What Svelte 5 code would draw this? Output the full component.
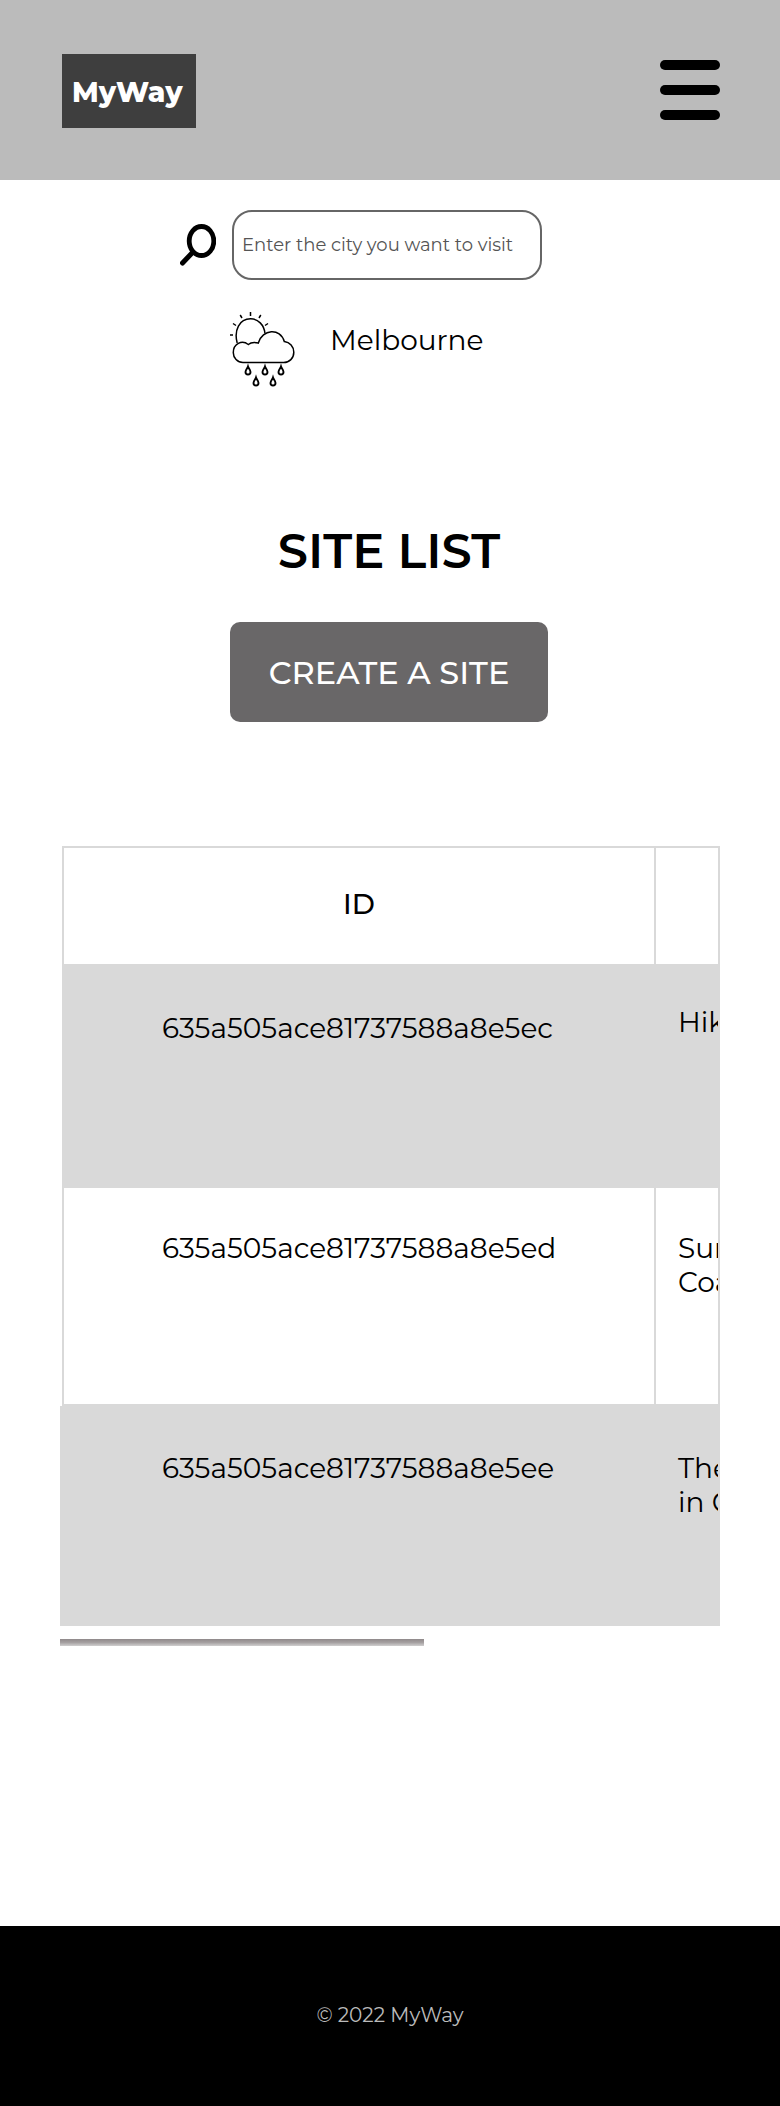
<script>
  let city = $state('');
  const sites = [
    { id: '635a505ace81737588a8e5ec', name: ['Hike'], lead: true },
    { id: '635a505ace81737588a8e5ed', name: ['Sunshine', 'Coast'] },
    { id: '635a505ace81737588a8e5ee', name: ['The', 'in C'] }
  ];
  const drops = [[18, 54], [35, 54], [51, 54], [26, 65], [43, 65]];
</script>

<div class="page">
  <header>
    <a class="logo" href="#home">MyWay</a>
    <button class="burger" aria-label="Menu"><span></span><span></span><span></span></button>
  </header>

  <main>
    <section class="intro">
      <form class="search">
        <button class="find" type="button" aria-label="Search">
          <svg width="36" height="42" viewBox="0 0 36 42" fill="none" stroke="#000">
            <ellipse cx="21.5" cy="17" rx="12.3" ry="14.5" stroke-width="4.8" />
            <path d="M12.5 28.5 2.5 39" stroke-width="5" stroke-linecap="round" />
          </svg>
        </button>
        <input type="text" aria-label="City" placeholder="Enter the city you want to visit" bind:value={city} />
      </form>

      <div class="weather">
        <svg width="65" height="76" viewBox="0 0 65 76" fill="none" stroke="#000" stroke-width="1.5">
          <path d="M7.2 31C3.7 18 9.5 6.8 20.5 6.8c7.5 0 13.6 6 14.5 14.7" />
          <path d="M20.5 0v4M10.2 3l1.8 3M30.8 3 29 6M3 11.5l3 2M38 11.5l-3 2M0 23h3" />
          <path d="M13 50.5a9.8 9.8 0 0 1-9.7-10c0-8.500 8.500-13 15-8 2.500-2.200 6-2.600 10-1.500 4-14 22-15.500 26-1.500 5.500.7 9.500 5 9.500 10.700 0 6-4.500 10.300-10 10.300z" />
          {#each drops as [x, y]}
            <path transform="translate({x} {y})" stroke-width="1.900" d="M0 .5C-.6 2.500-2.500 3.800-2.500 6a2.500 2.500 0 0 0 5 0C2.500 3.800.6 2.500 0 .5z" />
          {/each}
        </svg>
        <span>Melbourne</span>
      </div>

      <h1>SITE LIST</h1>
      <button class="create">CREATE A SITE</button>
    </section>

    <div class="scroller">
      <table>
        <colgroup><col class="id-col" /><col class="name-col" /></colgroup>
        <thead>
          <tr><th scope="col">ID</th><th scope="col"></th></tr>
        </thead>
        <tbody>
          {#each sites as site}
            <tr>
              <td>{site.id}</td>
              <td class:lead={site.lead}>{#each site.name as line}<div>{line}</div>{/each}</td>
            </tr>
          {/each}
        </tbody>
      </table>
    </div>
    <div class="thumb"></div>
  </main>

  <footer>© 2022 MyWay</footer>
</div>

<style>
  :global(body) { margin: 0; background: #fff; }
  .page {
    display: flex;
    flex-direction: column;
    min-height: 100vh;
    font-family: Montserrat, Inter, sans-serif;
    font-size: 28px;
    line-height: 34px;
    color: #000;
  }
  .page * { box-sizing: border-box; }
  button { border: 0; padding: 0; background: none; font: inherit; cursor: pointer; }
  header {
    display: flex;
    align-items: center;
    justify-content: space-between;
    height: 180px;
    padding: 2px 60px 0 62px;
    background: #bbb;
  }
  .logo {
    display: flex;
    align-items: center;
    width: 134px;
    height: 74px;
    padding: 2px 0 0 10px;
    background: #3e3e3e;
    color: #fff;
    font-weight: 800;
    text-decoration: none;
  }
  .burger { display: flex; flex-direction: column; gap: 15px; width: 60px; margin-bottom: 2px; }
  .burger span { height: 10px; border-radius: 5px; background: #000; }
  main {
    flex: 1;
    padding: 30px 60px;
  }
  .intro {
    display: flex;
    flex-direction: column;
    align-items: center;
    padding-right: 2px;
  }
  .search { display: flex; align-items: center; gap: 16px; margin-right: 56px; }
  .find { display: flex; }
  input {
    width: 310px;
    height: 70px;
    padding: 2px 8px;
    border: 2px solid #666;
    border-radius: 20px;
    font: 400 18px Montserrat, Inter, sans-serif;
    color: #000;
    outline: 0;
  }
  input::placeholder { color: #555; opacity: 1; }
  .weather {
    display: flex;
    gap: 35px;
    width: 318px;
    margin-top: 32px;
  }
  .weather span { padding-top: 11px; }
  h1 {
    margin: 133px 0 0;
    font-size: 48px;
    line-height: 60px;
    font-weight: 600;
  }
  .create {
    width: 318px;
    height: 100px;
    margin-top: 41px;
    padding-top: 2px;
    border-radius: 10px;
    background: #696768;
    color: #fff;
    font-size: 32px;
    font-weight: 500;
  }
  .scroller {
    margin-top: 124px;
    border-right: 2px solid #d9d9d9;
    overflow-x: auto;
    scrollbar-width: none;
  }
  table { width: 960px; table-layout: fixed; border-collapse: separate; border-spacing: 0; }
  .id-col { width: 596px; }
  .name-col { width: 364px; }
  th {
    height: 120px;
    padding: 0 0 4px;
    font-weight: 500;
    box-shadow: inset 0 2px #d9d9d9, inset 0 -2px #d9d9d9;
  }
  td {
    height: 220px;
    padding: 45px 22px 0;
    vertical-align: top;
    background: #d9d9d9;
  }
  td.lead { padding-top: 39px; }
  th:first-child, td:first-child { border-left: 2px solid #fff; }
  td:first-child { padding-left: 100px; }
  tr:nth-child(even) td {
    background: #fff;
    box-shadow: inset 0 2px #d9d9d9, inset 0 -2px #d9d9d9;
  }
  th:first-child, tr:nth-child(even) td:first-child {
    box-shadow: inset 2px 2px #d9d9d9, inset -2px -2px #d9d9d9;
  }
  tbody tr:last-child td:first-child { border-left-color: #d9d9d9; }
  .thumb {
    width: 364px;
    height: 7px;
    margin-top: 13px;
    background: linear-gradient(#8f898a, #a5a0a1 50%, #d0cfcf);
  }
  footer {
    display: flex;
    align-items: center;
    justify-content: center;
    height: 180px;
    padding-bottom: 2px;
    background: #000;
    color: #bbb;
    font-size: 20px;
    line-height: 24px;
  }
  .page footer { box-sizing: border-box; }
</style>
